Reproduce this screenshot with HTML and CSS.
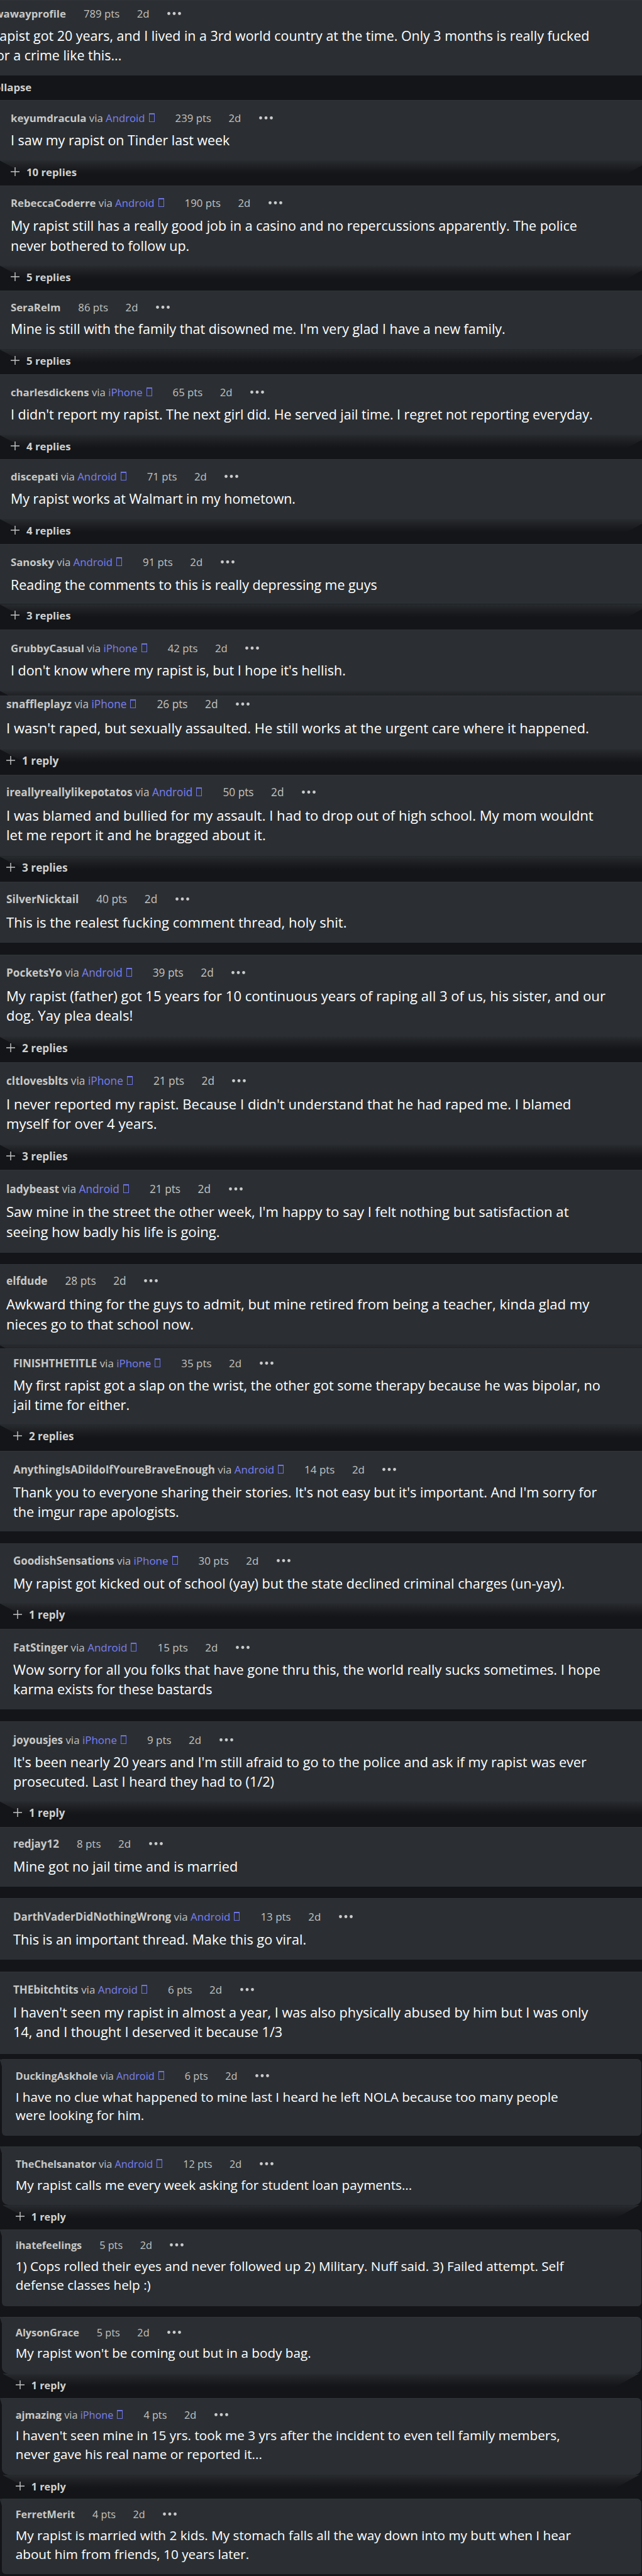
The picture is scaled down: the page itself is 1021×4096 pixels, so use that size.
FILE: index.html
```html
<!DOCTYPE html>
<html lang="en">

<head>
    <meta charset="UTF-8">
    <meta name="viewport" content="width=device-width, initial-scale=1.0">
    <title>Comments</title>
    <link rel="stylesheet" href="styles.css">
</head>

<body>
    <div class="comments"></div>

    <script src="comments.js"></script>
</body>

</html>
```
FILE: styles.css
```css
* {
    margin: 0;
    padding: 0;
    box-sizing: border-box;
}

body {
    background-color: #131518;
    font-family: "Open Sans", "Noto Sans", sans-serif;
    color: #fff;
    overflow-x: hidden;
}

.comments {
    height: 4096px;
    overflow: hidden;
}

/* groups */
.group {
    --left: 17px;
    --size: 21.42px;
    --line: 31.2px;
    --meta: 16.75px;
}

/* the top comment is scrolled off to the left */
.group.first {
    --left: 0px;
    margin-left: -45px;
}

.group.b {
    --left: 10px;
    --size: 22.08px;
    --line: 31.3px;
    --meta: 17.25px;
}

.group.c {
    --left: 21px;
    --size: 21.65px;
    --line: 31px;
    --meta: 16.97px;
}

.group.d {
    --left: 24.7px;
    --size: 20.73px;
    --line: 29.8px;
    --meta: 16.25px;
}

/* comment */
.card {
    position: relative;
    padding-left: var(--left);
    background-color: #2b2f33;
    border-top: 1px solid #303438;
}

.group.d .card {
    margin: 0 1.5px 0 2.6px;
    padding-left: calc(var(--left) - 2.6px);
    border-radius: 0 7px 6px 6px;
}

.group.d .card.open {
    border-radius: 0 7px 10px 10px;
}

.group.d .card::before {
    content: "";
    position: absolute;
    left: -3px;
    top: -1px;
    width: 4px;
    height: 13px;
    background-color: #2b2f33;
    clip-path: polygon(0 0, 100% 0, 100% 100%);
}

.meta {
    display: flex;
    align-items: baseline;
    height: 24px;
    line-height: 24px;
    font-size: var(--meta);
    color: #c2c2c0;
    white-space: pre;
}

.name {
    font-weight: 700;
    color: #c8c8c6;
}

.via {
    color: #7a7ff0;
}

.phone {
    display: inline-block;
    width: 9px;
    height: 14px;
    margin-left: 6px;
    border: 1.5px solid #6f74e8;
    border-top-width: 2.5px;
}

.pts {
    margin-left: 28px;
}

.phone + .pts {
    margin-left: 33px;
}

.time {
    margin-left: 27.5px;
}

.dots {
    width: 22px;
    height: 5px;
    margin-left: 28.5px;
    align-self: flex-start;
    margin-top: 9px;
    fill: #ccc;
}

.text {
    font-size: var(--size);
    line-height: var(--line);
    white-space: pre;
}

/* replies */
.bar {
    position: relative;
    display: flex;
    padding-left: var(--left);
    overflow: hidden;
}

.bar.open::before {
    content: "";
    position: absolute;
    left: 0;
    top: 0;
    width: 1036px;
    height: 22px;
    background: linear-gradient(#292c30, #212326 30%, #17191c 75%, #131518);
    clip-path: polygon(0 0, 100% 0, calc(100% - 40px) 100%, 40px 100%, 0 4%);
}

.group.b .bar.open::before,
.group.c .bar.open::before {
    width: 1080px;
}

.group.d .bar.open::before {
    left: 5px;
    width: 1012px;
}

.bar span {
    position: relative;
    margin-top: 7px;
    line-height: 24px;
    font-size: var(--meta);
    font-weight: 700;
    color: #d0d0ce;
}

.plus {
    position: relative;
    width: 14px;
    height: 14px;
    margin: 11px 11px 0 0;
    stroke: #c8c8c8;
    stroke-width: 1.4;
}
```
FILE: comments.js
```
// group, name, via, points, [head, gap, card height, bar height], lines, replies
const comments = [
    ['first', 'throwawayprofile', '', 789, [28.4, 36.6, 120, 39], ['My rapist got 20 years, and I lived in a 3rd world country at the time. Only 3 months is really fucked', 'up for a crime like this...'], 'Collapse'],
    ['a', 'keyumdracula', 'Android', 239, [35.2, 36.9, 95.7, 40.3], ['I saw my rapist on Tinder last week'], '10 replies'],
    ['a', 'RebeccaCoderre', 'Android', 190, [34.2, 38.2, 126.7, 40.2], ['My rapist still has a really good job in a casino and no repercussions apparently. The police', 'never bothered to follow up.'], '5 replies'],
    ['a', 'SeraRelm', '', 86, [33.5, 35.6, 93.3, 39.5], ["Mine is still with the family that disowned me. I'm very glad I have a new family."], '5 replies'],
    ['a', 'charlesdickens', 'iPhone', 65, [35.7, 36.4, 96.4, 39.4], ["I didn't report my rapist. The next girl did. He served jail time. I regret not reporting everyday."], '4 replies'],
    ['a', 'discepati', 'Android', 71, [34.3, 36.2, 94.1, 40.2], ['My rapist works at Walmart in my hometown.'], '4 replies'],
    ['a', 'Sanosky', 'Android', 91, [35.9, 37.3, 95.7, 40.6], ['Reading the comments to this is really depressing me guys'], '3 replies'],
    ['a', 'GrubbyCasual', 'iPhone', 42, [36.1, 37.1, 96.8, 8.5], ["I don't know where my rapist is, but I hope it's hellish."], 'cut'],
    ['b', 'snaffleplayz', 'iPhone', 26, [20.1, 39.9, 84.4, 40.9], ["I wasn't raped, but sexually assaulted. He still works at the urgent care where it happened."], '1 reply'],
    ['b', 'ireallyreallylikepotatos', 'Android', 50, [35.4, 37.8, 129.7, 40.4], ['I was blamed and bullied for my assault. I had to drop out of high school. My mom wouldnt', 'let me report it and he bragged about it.'], '3 replies'],
    ['b', 'SilverNicktail', '', 40, [34.8, 38.4, 97.8, 18.2], ['This is the realest fucking comment thread, holy shit.'], ''],
    ['b', 'PocketsYo', 'Android', 39, [36.2, 37.8, 130.4, 40.6], ['My rapist (father) got 15 years for 10 continuous years of raping all 3 of us, his sister, and our', 'dog. Yay plea deals!'], '2 replies'],
    ['b', 'cltlovesblts', 'iPhone', 21, [37, 37.9, 130.9, 40.5], ["I never reported my rapist. Because I didn't understand that he had raped me. I blamed", 'myself for over 4 years.'], '3 replies'],
    ['b', 'ladybeast', 'Android', 21, [37.3, 38.1, 131.7, 18.5], ["Saw mine in the street the other week, I'm happy to say I felt nothing but satisfaction at", 'seeing how badly his life is going.'], ''],
    ['b', 'elfdude', '', 28, [33.6, 38.5, 128.1, 6.2], ['Awkward thing for the guys to admit, but mine retired from being a teacher, kinda glad my', 'nieces go to that school now.'], 'cut'],
    ['c', 'FINISHTHETITLE', 'iPhone', 35, [30.3, 36.4, 120.8, 41.3], ['My first rapist got a slap on the wrist, the other got some therapy because he was bipolar, no', 'jail time for either.'], '2 replies'],
    ['c', 'AnythingIsADildoIfYoureBraveEnough', 'Android', 14, [37, 37.2, 128.9, 18.3], ["Thank you to everyone sharing their stories. It's not easy but it's important. And I'm sorry for", 'the imgur rape apologists.'], ''],
    ['c', 'GoodishSensations', 'iPhone', 30, [35, 37.3, 95.2, 40.7], ['My rapist got kicked out of school (yay) but the state declined criminal charges (un-yay).'], '1 reply'],
    ['c', 'FatStinger', 'Android', 15, [37, 36.4, 128.8, 18.5], ['Wow sorry for all you folks that have gone thru this, the world really sucks sometimes. I hope', 'karma exists for these bastards'], ''],
    ['c', 'joyousjes', 'iPhone', 9, [36.6, 36.4, 127, 41.5], ["It's been nearly 20 years and I'm still afraid to go to the police and ask if my rapist was ever", 'prosecuted. Last I heard they had to (1/2)'], '1 reply'],
    ['c', 'redjay12', '', 8, [33.1, 37.3, 94.8, 18.2], ['Mine got no jail time and is married'], ''],
    ['c', 'DarthVaderDidNothingWrong', 'Android', 13, [36.1, 37.3, 97.3, 18.8], ['This is an important thread. Make this go viral.'], ''],
    ['c', 'THEbitchtits', 'Android', 6, [36.1, 37.8, 131.5, 8.4], ["I haven't seen my rapist in almost a year, I was also physically abused by him but I was only", '14, and I thought I deserved it because 1/3'], ''],
    ['d', 'DuckingAskhole', 'Android', 6, [33.4, 35.8, 121.4, 17.3], ['I have no clue what happened to mine last I heard he left NOLA because too many people', 'were looking for him.'], ''],
    ['d', 'TheChelsanator', 'Android', 12, [34.9, 35.8, 93.1, 38.7], ['My rapist calls me every week asking for student loan payments...'], '1 reply'],
    ['d', 'ihatefeelings', '', 5, [31.4, 37.2, 121.7, 17.3], ['1) Cops rolled their eyes and never followed up 2) Military. Nuff said. 3) Failed attempt. Self', 'defense classes help :)'], ''],
    ['d', 'AlysonGrace', '', 5, [31.6, 35.7, 90.1, 38.6], ["My rapist won't be coming out but in a body bag."], '1 reply'],
    ['d', 'ajmazing', 'iPhone', 4, [34.1, 35.7, 122.6, 38.2], ["I haven't seen mine in 15 yrs. took me 3 yrs after the incident to even tell family members,", 'never gave his real name or reported it...'], '1 reply'],
    ['d', 'FerretMerit', '', 4, [31.3, 36.3, 119.8, 2.5], ['My rapist is married with 2 kids. My stomach falls all the way down into my butt when I hear', 'about him from friends, 10 years later.'], ''],
]

const plus = '<svg class="plus" viewBox="0 0 14 14"><path d="M7 0V14M0 7H14"/></svg>'
const minus = '<svg class="plus" viewBox="0 0 14 14"><path d="M0 7H14"/></svg>'
const dots = '<svg class="dots" viewBox="0 0 22 5"><circle cx="2.5" cy="2.5" r="2.4"/><circle cx="11" cy="2.5" r="2.4"/><circle cx="19.5" cy="2.5" r="2.4"/></svg>'

function renderComment([group, name, via, pts, [head, gap, card, bar], lines, replies]) {
    const collapse = replies === 'Collapse'
    const open = replies && !collapse ? 'open' : ''
    const label = replies && replies !== 'cut' ? `${collapse ? minus : plus}<span>${replies}</span>` : ''
    const source = via ? `<span> via </span><span class="via">${via}</span><i class="phone"></i>` : ''
    return `
    <div class="group ${group}">
        <div class="card ${open}" style="height: ${card}px; padding-top: ${head - 19.6}px">
            <div class="meta"><span class="name">${name}</span>${source}<span class="pts">${pts} pts</span><span class="time">2d</span>${dots}</div>
            <p class="text" style="margin-top: ${gap - 29.4}px">${lines.join('\n')}</p>
        </div>
        <div class="bar ${open}" style="height: ${bar}px">${label}</div>
    </div>`
}

document.querySelector('.comments').innerHTML = comments.map(renderComment).join('')
```
